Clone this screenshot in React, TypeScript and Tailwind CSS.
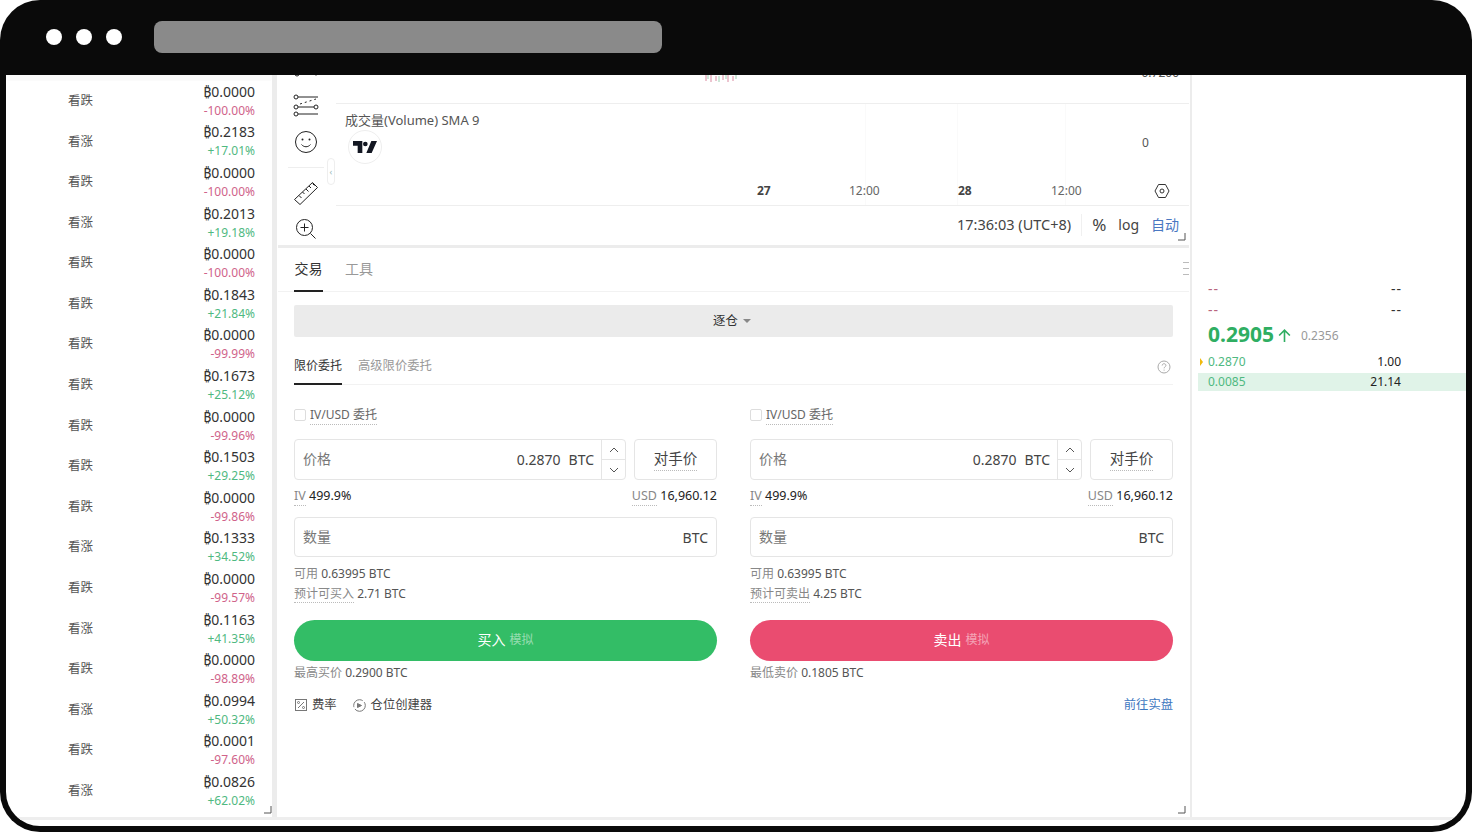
const rows = [
  ['看跌', '0.0000', '-100.00%'],
  ['看涨', '0.2183', '+17.01%'],
  ['看跌', '0.0000', '-100.00%'],
  ['看涨', '0.2013', '+19.18%'],
  ['看跌', '0.0000', '-100.00%'],
  ['看跌', '0.1843', '+21.84%'],
  ['看跌', '0.0000', '-99.99%'],
  ['看跌', '0.1673', '+25.12%'],
  ['看跌', '0.0000', '-99.96%'],
  ['看跌', '0.1503', '+29.25%'],
  ['看跌', '0.0000', '-99.86%'],
  ['看涨', '0.1333', '+34.52%'],
  ['看跌', '0.0000', '-99.57%'],
  ['看涨', '0.1163', '+41.35%'],
  ['看跌', '0.0000', '-98.89%'],
  ['看涨', '0.0994', '+50.32%'],
  ['看跌', '0.0001', '-97.60%'],
  ['看涨', '0.0826', '+62.02%'],
];

function ResizeCorner({ className }: { className: string }) {
  return (
    <svg width="8" height="8" viewBox="0 0 8 8" className={`absolute text-[#555] ${className}`}>
      <path d="M0 7h7V0" fill="none" stroke="currentColor" />
    </svg>
  );
}

function OptionList() {
  return (
    <div className="w-[266px] shrink-0 relative overflow-hidden">
      <div className="h-[6px] bg-[#fbfbfb] rounded-b-[3px]" />
      {rows.map((r, i) => (
        <div key={i} className="h-[40.6px] flex items-center justify-between pl-[62px] pr-[17px]">
          <span className="text-[12.5px] text-[#555]">{r[0]}</span>
          <div className="flex flex-col items-end leading-[18px]">
            <span className="text-[14px] text-[#333]">₿{r[1]}</span>
            <span className={`text-[12px] mt-[1px] ${r[2].startsWith('-') ? 'text-[#d0638a]' : 'text-[#4fb981]'}`}>{r[2]}</span>
          </div>
        </div>
      ))}
      <ResizeCorner className="right-0 bottom-[3px]" />
    </div>
  );
}

function Tools() {
  return (
    <div className="w-[58px] shrink-0 flex flex-col items-center pr-[2px] text-[#222] relative -mt-[4px]">
      <svg width="26" height="8" viewBox="0 0 26 8" className="ml-[2px] mb-[15px]" fill="none" stroke="currentColor">
        <circle cx="3" cy="3" r="2" />
        <circle cx="22" cy="2" r="2" />
      </svg>
      <svg width="26" height="24" viewBox="0 0 26 24" fill="none" stroke="currentColor" className="mb-[12px]">
        <circle cx="3" cy="3" r="2" />
        <path d="M5 3h20" />
        <circle cx="3" cy="13" r="2" />
        <circle cx="23" cy="13" r="2" />
        <path d="M5 13h16" />
        <path d="M7 10l16-5" strokeDasharray="2 3" />
        <circle cx="3" cy="20" r="2" />
        <path d="M5 20h20" />
      </svg>
      <svg width="24" height="24" viewBox="0 0 24 24" fill="none" stroke="currentColor" className="mb-[13px]">
        <circle cx="12" cy="12" r="10.5" />
        <circle cx="8.5" cy="9.5" r="1" fill="currentColor" stroke="none" />
        <circle cx="15.5" cy="9.5" r="1" fill="currentColor" stroke="none" />
        <path d="M7.5 14.5c2.5 3 6.5 3 9 0" />
      </svg>
      <div className="w-[36px] h-px bg-[#eee] mb-[12px]" />
      <svg width="26" height="26" viewBox="0 0 26 26" fill="none" stroke="currentColor" className="mb-[12px]">
        <path d="M1.5 19.5L19.5 2.5l5 5L7 24.5z" />
        <path d="M6 15.5l2.5 2.5M9.5 12l2 2M13 9l2.5 2.5M16 6l2 2M19.5 3.5l2 2" />
      </svg>
      <svg width="22" height="22" viewBox="0 0 22 22" fill="none" stroke="currentColor">
        <circle cx="9.5" cy="9.5" r="8" />
        <path d="M5.5 9.5h8M9.5 5.5v8M15.5 15.5l5 5" />
      </svg>
      <div className="absolute right-[1px] top-[87px] w-[8px] h-[27px] rounded-[4px] border border-[#eee] bg-white flex items-center justify-center text-[9px] text-[#9bb]">‹</div>
    </div>
  );
}

function Chart() {
  return (
    <div className="h-[170px] shrink-0 flex relative overflow-hidden">
      <Tools />
      <div className="flex-1 flex flex-col relative">
        <div className="h-[29px] border-b border-[#eee] relative">
          <svg width="34" height="8" viewBox="0 0 34 8" className="absolute left-[368px] top-0" fill="none">
            <path d="M2 0v6M7 0v7M12 1v5M19 0v5M24 0v7M29 1v5" stroke="#d98aa0" />
            <path d="M4 0v4M15 1v6M22 0v4M32 0v4" stroke="#9ccfb2" />
          </svg>
          <span className="absolute right-[10px] -top-[11px] text-[12px] text-[#555]">0.7200</span>
        </div>
        <div className="h-[102px] border-b border-[#eee] relative">
          <div className="absolute left-[529px] top-0 bottom-0 w-px bg-[#fafafa]" />
          <div className="absolute left-[621px] top-0 bottom-0 w-px bg-[#fafafa]" />
          <div className="absolute left-[729px] top-0 bottom-0 w-px bg-[#fafafa]" />
          <div className="pl-[9px] pt-[7px] text-[13px] leading-[18px] text-[#555]">成交量(Volume) SMA 9</div>
          <div className="absolute left-[12px] top-[26px] w-[34px] h-[34px] rounded-full border border-[#eee] bg-white flex items-center justify-center">
            <svg width="24" height="12" viewBox="0 0 36 18" fill="#131722">
              <path d="M14 18H7V7H0V0h14zM28 18h-8L27.500 0H36zM22 4.500a3.500 3.500 0 1 1-7 0 3.500 3.500 0 0 1 7 0z" />
            </svg>
          </div>
          <span className="absolute left-[806px] top-[31px] text-[12px] leading-[16px] text-[#555]">0</span>
          <div className="absolute left-[421px] top-[79px] text-[12px] leading-[16px] font-bold text-[#444]">27</div>
          <div className="absolute left-[513px] top-[79px] text-[12px] leading-[16px] text-[#666]">12:00</div>
          <div className="absolute left-[622px] top-[79px] text-[12px] leading-[16px] font-bold text-[#444]">28</div>
          <div className="absolute left-[715px] top-[79px] text-[12px] leading-[16px] text-[#666]">12:00</div>
          <svg width="16" height="16" viewBox="0 0 16 16" fill="none" stroke="#333" className="absolute left-[818px] top-[79px]">
            <path d="M4.500 1.500h7L15 8l-3.500 6.500h-7L1 8z" />
            <circle cx="8" cy="8" r="2" />
          </svg>
        </div>
        <div className="flex-1 flex items-center justify-end pr-[10px] pb-[1px] text-[#444]">
          <span className="text-[14.5px]">17:36:03 (UTC+8)</span>
          <div className="w-px h-[22px] bg-[#f0f0f0] mx-[10px]" />
          <span className="text-[17px]">%</span>
          <span className="text-[14px] ml-[12px] -mt-[2px]">log</span>
          <span className="text-[14px] ml-[12px] -mt-[2px] text-[#4a78c2]">自动</span>
        </div>
      </div>
      <ResizeCorner className="right-[3px] bottom-[4px]" />
    </div>
  );
}

function Dotted({ children, className = '' }: { children: React.ReactNode; className?: string }) {
  return <span className={`border-b border-dotted border-[#bbb] ${className}`}>{children}</span>;
}

function OrderForm({ side }: { side: 'buy' | 'sell' }) {
  const buy = side === 'buy';
  return (
    <div className="flex-1 min-w-0">
      <div className="flex items-center h-[16px] text-[12px] text-[#666]">
        <span className="w-[12px] h-[12px] border border-[#ddd] rounded-[2px] mr-[4px]" />
        <Dotted>IV/USD 委托</Dotted>
      </div>
      <div className="flex gap-[8px] mt-[16px]">
        <div className="flex-1 h-[41px] border border-[#e5e5e5] rounded-[4px] flex items-center">
          <span className="pl-[8px] pb-[2px] text-[14px] text-[#777]">价格</span>
          <span className="ml-auto text-[14px] text-[#444]">0.2870</span>
          <span className="ml-[8px] mr-[7px] text-[14px] text-[#444]">BTC</span>
          <div className="w-[24px] h-full border-l border-[#e5e5e5] flex flex-col">
            <div className="flex-1 flex items-center justify-center border-b border-[#e5e5e5]">
              <svg width="10" height="6" viewBox="0 0 10 6" fill="none" stroke="#555"><path d="M1 5l4-4 4 4" /></svg>
            </div>
            <div className="flex-1 flex items-center justify-center">
              <svg width="10" height="6" viewBox="0 0 10 6" fill="none" stroke="#555"><path d="M1 1l4 4 4-4" /></svg>
            </div>
          </div>
        </div>
        <div className="w-[83px] h-[41px] border border-[#e5e5e5] rounded-[4px] flex items-center justify-center text-[14.5px] text-[#444]">
          <Dotted>对手价</Dotted>
        </div>
      </div>
      <div className="flex justify-between h-[16px] mt-[8px] text-[12.5px] leading-[16px]">
        <span className="text-[#222]"><span className="text-[#888]"><Dotted className="pb-[1px]">IV</Dotted></span> 499.9%</span>
        <span className="text-[#222]"><span className="text-[#888]"><Dotted className="pb-[1px]">USD</Dotted></span> 16,960.12</span>
      </div>
      <div className="h-[40px] mt-[13px] border border-[#e5e5e5] rounded-[4px] flex items-center justify-between px-[8px] text-[14px]">
        <span className="text-[#777] pb-[2px]">数量</span>
        <span className="text-[#444]">BTC</span>
      </div>
      <div className="mt-[7px] text-[12px] leading-[20px] text-[#555]">
        <div><span className="text-[#888]">可用</span> 0.63995 BTC</div>
        <div><span className="text-[#888]"><Dotted>{buy ? '预计可买入' : '预计可卖出'}</Dotted></span> {buy ? '2.71' : '4.25'} BTC</div>
      </div>
      <div className={`h-[41px] mt-[16px] pb-[2px] rounded-full flex items-center justify-center text-[14px] text-white ${buy ? 'bg-[#33bd66]' : 'bg-[#ea4c70]'}`}>
        {buy ? '买入' : '卖出'}
        <span className="ml-[4px] text-[12px] text-white/50">模拟</span>
      </div>
      <div className="mt-[3px] text-[12px] leading-[18px] text-[#555]">
        <span className="text-[#888]">{buy ? '最高买价' : '最低卖价'}</span> {buy ? '0.2900' : '0.1805'} BTC
      </div>
    </div>
  );
}

function Trade() {
  return (
    <div className="flex-1 px-[16px] relative">
      <div className="flex h-[44px] border-b border-[#f2f2f2] -mx-[16px] px-[16px] text-[14px]">
        <div className="h-[44px] w-[29px] border-b-2 border-[#222] pb-[2px] flex items-center justify-center text-[#333] whitespace-nowrap">交易</div>
        <div className="h-[43px] ml-[22px] pb-[3px] flex items-center text-[#999]">工具</div>
      </div>
      <div className="absolute right-0 top-[14px] w-[6px] flex flex-col gap-[5px]">
        <div className="h-px bg-[#bbb]" /><div className="h-px bg-[#bbb]" /><div className="h-px bg-[#bbb]" />
      </div>
      <div className="mt-[13px] h-[32px] rounded-[2px] bg-[#ebebeb] flex items-center justify-center pr-[3px] text-[12.4px] text-[#333]">
        逐仓
        <span className="ml-[5px] w-0 h-0 border-x-[4px] border-x-transparent border-t-[4px] border-t-[#888]" />
      </div>
      <div className="mt-[13px] h-[35px] flex items-center border-b border-[#f2f2f2] text-[12px] relative">
        <div className="h-[35px] w-[48px] border-b-2 border-[#222] flex items-center justify-center text-[#333] whitespace-nowrap">限价委托</div>
        <div className="ml-[16px] text-[12.3px] text-[#999] -mt-[1px]">高级限价委托</div>
        <svg width="14" height="14" viewBox="0 0 14 14" fill="none" className="ml-auto mr-[2px]" stroke="#aaa">
          <circle cx="7" cy="7" r="6" />
          <path d="M5.200 5.500c0-2.400 3.700-2.400 3.700 0 0 1.300-1.800 1.300-1.800 2.800M7.100 9.600v1" />
        </svg>
      </div>
      <div className="flex gap-[33px] mt-[22px]">
        <OrderForm side="buy" />
        <OrderForm side="sell" />
      </div>
      <div className="flex items-center mt-[14px] h-[18px] pl-[1px] text-[12.3px] text-[#444]">
        <svg width="12" height="12" viewBox="0 0 12 12" fill="none" stroke="#777" className="mr-[5px]">
          <rect x="0.500" y="0.500" width="11" height="11" />
          <path d="M3 9l6-6" />
          <circle cx="3.500" cy="3.500" r="1" />
          <circle cx="8.500" cy="8.500" r="1" />
        </svg>
        费率
        <svg width="13" height="13" viewBox="0 0 13 13" fill="none" stroke="#777" className="ml-[16px] mr-[5px]">
          <circle cx="6.500" cy="6.500" r="5.800" strokeDasharray="14 2" />
          <path d="M4.500 4.500l4 2-4 2z" fill="#777" />
        </svg>
        仓位创建器
        <span className="ml-auto text-[#3d77bf]">前往实盘</span>
      </div>
      <ResizeCorner className="right-[3px] bottom-[3px]" />
    </div>
  );
}

function OrderBook() {
  return (
    <div className="flex-1 min-w-0 pt-[204px] text-[12px]">
      <div className="pl-[16px] pr-[64px]">
        <div className="flex justify-between h-[21px] pb-[2px] items-center text-[14px] tracking-[1px]"><span className="text-[#b8657e]">--</span><span className="text-[#333]">--</span></div>
        <div className="flex justify-between h-[21px] pb-[2px] items-center text-[14px] tracking-[1px]"><span className="text-[#b8657e]">--</span><span className="text-[#333]">--</span></div>
        <div className="flex items-center h-[28px] text-[#2fae62]">
          <span className="text-[21px] font-bold">0.2905</span>
          <svg width="15" height="15" viewBox="0 0 14 14" fill="none" stroke="currentColor" strokeWidth="1.500" className="ml-[3px]">
            <path d="M7 13V2M2 7l5-5 5 5" />
          </svg>
          <span className="ml-[9px] mt-[2px] text-[12px] text-[#999]">0.2356</span>
        </div>
      </div>
      <div className="flex justify-between h-[24px] pt-[2px] items-center pl-[16px] pr-[65px] relative">
        <span className="absolute left-[8px] w-0 h-0 border-y-[4px] border-y-transparent border-l-[3px] border-l-[#f0b90b]" />
        <span className="text-[#4fb981]">0.2870</span>
        <span className="text-[#222]">1.00</span>
      </div>
      <div className="flex justify-between h-[18px] items-center ml-[6px] pl-[10px] pr-[65px] bg-[#e0f3e8]">
        <span className="text-[#4fb981]">0.0085</span>
        <span className="text-[#222]">21.14</span>
      </div>
    </div>
  );
}

export default function App() {
  return (
    <div className="w-[1472px] h-[832px] bg-white overflow-hidden" style={{ fontFamily: '"Noto Sans","Noto Sans CJK SC",sans-serif' }}>
      <div className="w-full h-full bg-[#0a0a0a] rounded-[40px] flex flex-col overflow-hidden">
        <div className="h-[75px] shrink-0 flex items-center pb-[1px]">
          <div className="flex gap-[14px] ml-[46px]">
            <div className="w-[16px] h-[16px] rounded-full bg-white" />
            <div className="w-[16px] h-[16px] rounded-full bg-white" />
            <div className="w-[16px] h-[16px] rounded-full bg-white" />
          </div>
          <div className="ml-[32px] w-[508px] h-[32px] rounded-[8px] bg-[#8a8a8a]" />
        </div>
        <div className="flex-1 min-h-0 flex flex-col mx-[6px] mb-[6px] pb-[6px] rounded-b-[34px] bg-white overflow-hidden">
          <div className="flex-1 min-h-0 flex border-b-[3px] border-[#eee]">
            <OptionList />
            <div className="w-[5px] shrink-0 mr-[1px] bg-[#ececec]" />
            <div className="w-[911px] shrink-0 flex flex-col relative">
              <Chart />
              <div className="h-[3px] shrink-0 bg-[#ececec]" />
              <Trade />
            </div>
            <div className="w-[2px] shrink-0 ml-[1px] bg-[#ececec]" />
            <OrderBook />
          </div>
        </div>
      </div>
    </div>
  );
}
